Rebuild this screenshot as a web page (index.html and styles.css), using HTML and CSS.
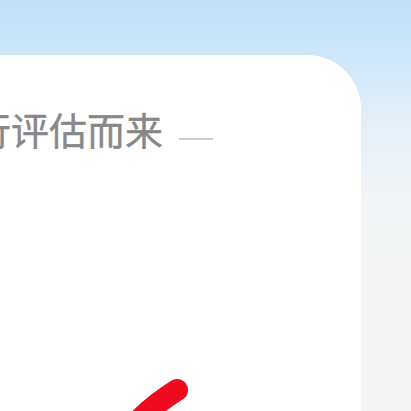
FILE: index.html
```html
<!DOCTYPE html>
<html>
<head>
<meta charset="utf-8">
<link rel="stylesheet" href="styles.css">
</head>
<body>
<div class="page">
  <div class="card">
    <div class="title">
      <span class="text">行评估而来</span>
      <span class="dash"></span>
    </div>
    <svg class="mark" width="361" height="120" viewBox="0 0 361 120">
      <path d="M177 72 C166 79 153 88 141 100 C133 108 125 116 117 126" fill="none" stroke="#ee0a1f" stroke-width="22" stroke-linecap="round"/>
    </svg>
  </div>
</div>
</body>
</html>
```
FILE: styles.css
```css
html, body {
  margin: 0;
  padding: 0;
}
body {
  width: 411px;
  height: 411px;
  overflow: hidden;
  background: linear-gradient(to bottom, #bfe1f8 0px, #cfe7f8 60px, #e6f0f8 130px, #f3f5f7 200px, #f5f5f5 260px);
  font-family: "Noto Sans CJK SC", "Noto Sans", sans-serif;
}
.page {
  padding-top: 55px;
}
.card {
  width: 361px;
  height: 356px;
  background: #fff;
  border-top-right-radius: 54px;
  overflow: hidden;
}
.title {
  display: flex;
  align-items: center;
  gap: 16px;
  margin-left: -27px;
  padding-top: 52px;
}
.text {
  font-size: 38px;
  line-height: 44px;
  color: #888888;
  -webkit-text-stroke: 0.4px #888888;
}
.dash {
  width: 34px;
  height: 2px;
  background: #cfcfcf;
  margin-top: 20px;
}
.mark {
  display: block;
  margin-top: 167px;
}
```
